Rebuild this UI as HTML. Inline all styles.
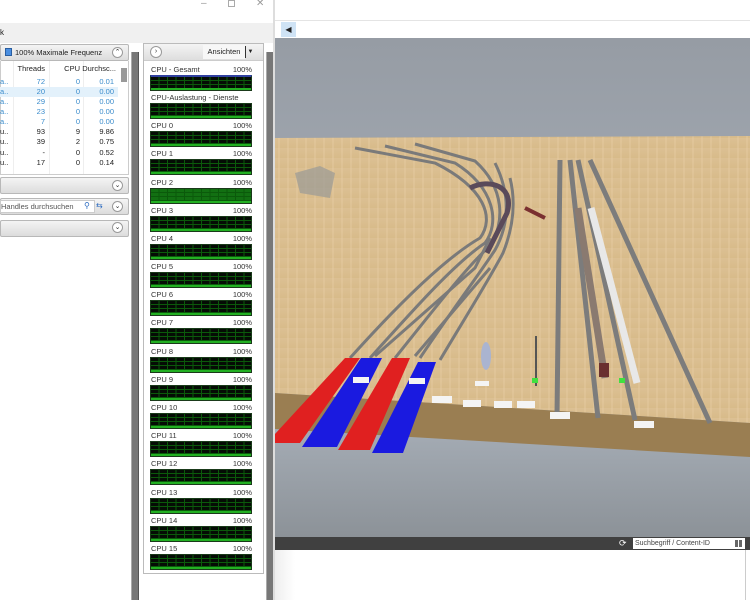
<!DOCTYPE html>
<html><head><meta charset="utf-8"><style>
*{margin:0;padding:0;box-sizing:border-box}
body{width:750px;height:600px;overflow:hidden;background:#fff;font-family:"Liberation Sans",sans-serif;font-size:7.5px;color:#222;position:relative}
.a{position:absolute}
.bar{position:absolute;left:0;width:129px;height:17px;border:1px solid #b8b8b8;border-radius:2px;background:linear-gradient(#f4f4f4,#dcdcdc)}
.cb{position:absolute;width:11px;height:11px;border-radius:50%;border:1px solid #999;background:#fff;font-size:7px;text-align:center;line-height:9px;color:#333}
.row{position:absolute;left:0;width:118px;height:10px;line-height:10px}
.row span{position:absolute;text-align:right}
.g{position:absolute;left:150px;width:102px;height:16px;background-color:#050c05;
background-image:repeating-linear-gradient(90deg,transparent 0 7.5px,#0b5a0b 7.5px 8.5px),repeating-linear-gradient(180deg,transparent 0 3px,#0b5a0b 3px 4px);border:1px solid #1a3a1a}
.g:after{content:"";position:absolute;left:0;right:0;bottom:0;height:2px;background:#22b022}
.lb{position:absolute;left:151px;width:101px;font-size:7.5px;color:#333}
.lb b{float:right;font-weight:normal}
</style></head><body>
<div class="a" style="left:0;top:0;width:275px;height:23px;background:#fff"></div>
<div class="a" style="left:201px;top:-2px;font-size:10px;color:#999">–</div>
<div class="a" style="left:228px;top:0px;width:7px;height:7px;border:1px solid #aaa"></div>
<div class="a" style="left:256px;top:-2px;font-size:10px;color:#999">✕</div>
<div class="a" style="left:0;top:23px;width:275px;height:20px;background:#f0f0f0"></div>
<div class="a" style="left:0;top:28px;font-size:8px">k</div>
<div class="a" style="left:273px;top:0;width:2px;height:600px;background:#ddd"></div>

<div class="bar" style="top:44px;height:17px"></div>
<div class="a" style="left:5px;top:48px;width:7px;height:8px;background:#4a8ee0;border:1px solid #2a5ea0"></div>
<div class="a" style="left:15px;top:48px;font-size:7.5px">100% Maximale Frequenz</div>
<div class="cb" style="left:112px;top:47px">⌃</div>
<div class="a" style="left:0;top:61px;width:129px;height:114px;border:1px solid #ccc;border-top:none;background:#fff"></div>
<div class="a" style="left:121px;top:68px;width:6px;height:14px;background:#999"></div>
<div class="a" style="left:13px;top:61px;width:1px;height:113px;background:#eee"></div>
<div class="a" style="left:49px;top:61px;width:1px;height:113px;background:#eee"></div>
<div class="a" style="left:83px;top:61px;width:1px;height:113px;background:#eee"></div>
<div class="row" style="top:64px"><span style="right:73px">Threads</span><span style="right:38px">CPU</span><span style="right:2px">Durchsc...</span></div>
<div style="color:#3a8ccc">
<div class="row" style="top:77px"><span style="left:0">a..</span><span style="right:73px">72</span><span style="right:38px">0</span><span style="right:4px">0.01</span></div>
<div class="row" style="top:87px;background:#e3f1fb"><span style="left:0">a..</span><span style="right:73px">20</span><span style="right:38px">0</span><span style="right:4px">0.00</span></div>
<div class="row" style="top:97px"><span style="left:0">a..</span><span style="right:73px">29</span><span style="right:38px">0</span><span style="right:4px">0.00</span></div>
<div class="row" style="top:107px"><span style="left:0">a..</span><span style="right:73px">23</span><span style="right:38px">0</span><span style="right:4px">0.00</span></div>
<div class="row" style="top:117px"><span style="left:0">a..</span><span style="right:73px">7</span><span style="right:38px">0</span><span style="right:4px">0.00</span></div>
</div>
<div class="row" style="top:127px"><span style="left:0">u..</span><span style="right:73px">93</span><span style="right:38px">9</span><span style="right:4px">9.86</span></div>
<div class="row" style="top:137px"><span style="left:0">u..</span><span style="right:73px">39</span><span style="right:38px">2</span><span style="right:4px">0.75</span></div>
<div class="row" style="top:148px"><span style="left:0">u..</span><span style="right:73px">-</span><span style="right:38px">0</span><span style="right:4px">0.52</span></div>
<div class="row" style="top:158px"><span style="left:0">u..</span><span style="right:73px">17</span><span style="right:38px">0</span><span style="right:4px">0.14</span></div>

<div class="bar" style="top:177px"></div><div class="cb" style="left:112px;top:180px">⌄</div>
<div class="bar" style="top:198px"></div>
<div class="a" style="left:0;top:200px;width:95px;height:13px;background:#fff;border:1px solid #ccc;font-size:7.5px;line-height:11px;color:#555">Handles durchsuchen</div>
<div class="a" style="left:84px;top:201px;font-size:8px;color:#2a6ac0">⚲</div>
<div class="a" style="left:96px;top:201px;font-size:8px;color:#2a6ac0">⇆</div>
<div class="cb" style="left:112px;top:201px">⌄</div>
<div class="bar" style="top:220px"></div><div class="cb" style="left:112px;top:222px">⌄</div>

<div class="a" style="left:131px;top:52px;width:8px;height:548px;background:#777;border-left:1px solid #aaa;border-right:1px solid #555"></div>

<div class="a" style="left:143px;top:43px;width:121px;height:531px;border:1px solid #bbb;background:#fff"></div>
<div class="a" style="left:144px;top:44px;width:119px;height:17px;background:linear-gradient(#f4f4f4,#dedede);border-bottom:1px solid #ccc"></div>
<div class="cb" style="left:150px;top:46px;width:12px;height:12px;line-height:10px">›</div>
<div class="a" style="left:203px;top:45px;width:42px;height:14px;background:#f7f7f7;font-size:7.5px;line-height:14px;text-align:center">Ansichten</div>
<div class="a" style="left:245px;top:46px;width:10px;height:12px;border-left:1px solid #333;font-size:6px;line-height:12px;text-align:center">▼</div>
<div class="a" style="left:266px;top:52px;width:7px;height:548px;background:#777;border-left:1px solid #aaa"></div>

<div class="lb" style="top:65px">CPU - Gesamt<b>100%</b></div><div class="g" style="top:75px;border-top:2px solid #3040a0"></div>
<div class="lb" style="top:93px">CPU-Auslastung - Dienste<b>100%</b></div><div class="g" style="top:103px"></div>
<div class="lb" style="top:121px">CPU 0<b>100%</b></div><div class="g" style="top:131px"></div>
<div class="lb" style="top:149px">CPU 1<b>100%</b></div><div class="g" style="top:159px"></div>
<div class="lb" style="top:178px">CPU 2<b>100%</b></div><div class="g" style="top:188px;background-color:#127012"></div>
<div class="lb" style="top:206px">CPU 3<b>100%</b></div><div class="g" style="top:216px"></div>
<div class="lb" style="top:234px">CPU 4<b>100%</b></div><div class="g" style="top:244px"></div>
<div class="lb" style="top:262px">CPU 5<b>100%</b></div><div class="g" style="top:272px"></div>
<div class="lb" style="top:290px">CPU 6<b>100%</b></div><div class="g" style="top:300px"></div>
<div class="lb" style="top:318px">CPU 7<b>100%</b></div><div class="g" style="top:328px"></div>
<div class="lb" style="top:347px">CPU 8<b>100%</b></div><div class="g" style="top:357px"></div>
<div class="lb" style="top:375px">CPU 9<b>100%</b></div><div class="g" style="top:385px"></div>
<div class="lb" style="top:403px">CPU 10<b>100%</b></div><div class="g" style="top:413px"></div>
<div class="lb" style="top:431px">CPU 11<b>100%</b></div><div class="g" style="top:441px"></div>
<div class="lb" style="top:459px">CPU 12<b>100%</b></div><div class="g" style="top:469px"></div>
<div class="lb" style="top:488px">CPU 13<b>100%</b></div><div class="g" style="top:498px"></div>
<div class="lb" style="top:516px">CPU 14<b>100%</b></div><div class="g" style="top:526px"></div>
<div class="lb" style="top:544px">CPU 15<b>100%</b></div><div class="g" style="top:554px"></div>

<div class="a" style="left:275px;top:20px;width:475px;height:1px;background:#e4e4e4"></div>
<div class="a" style="left:281px;top:22px;width:15px;height:15px;background:#cfe3f5;font-size:8px;line-height:15px;text-align:center;color:#222">◀</div>
<svg class="a" style="left:275px;top:38px" width="475" height="499" viewBox="0 0 475 499">
<defs>
<linearGradient id="sky" x1="0" y1="0" x2="0" y2="1"><stop offset="0" stop-color="#969ca4"/><stop offset="1" stop-color="#b4bcc8"/></linearGradient>
<linearGradient id="fl" x1="0" y1="0" x2="0" y2="1"><stop offset="0" stop-color="#b0b8c2"/><stop offset="1" stop-color="#8c9298"/></linearGradient>
<linearGradient id="wd" x1="0" y1="0" x2="0" y2="1"><stop offset="0" stop-color="#dcc094"/><stop offset="1" stop-color="#d8bb8a"/></linearGradient>
<pattern id="gr" width="9" height="10" patternUnits="userSpaceOnUse"><rect width="9" height="10" fill="url(#wd)"/><rect x="3" width="2" height="10" fill="#e6cfa6" opacity=".35"/></pattern>
</defs>
<rect width="475" height="499" fill="url(#sky)"/>
<rect y="340" width="475" height="159" fill="url(#fl)"/>
<polygon points="0,100 475,98 475,385 0,355" fill="url(#gr)"/>
<polygon points="0,355 475,385 475,419 0,391" fill="#9a7e52"/>
<path d="M20,135 L45,128 L60,135 L55,160 L25,155 Z" fill="#9a9a96" opacity=".7"/>
<g fill="none" stroke="#7a7a7a" stroke-width="3">
<path d="M75,320 C120,270 170,220 205,200 C220,180 210,150 160,125 L80,110"/>
<path d="M95,320 C140,270 180,225 210,205 C225,185 220,150 180,125 L110,108"/>
<path d="M120,320 C160,270 195,225 215,208 C230,185 230,150 200,123 L140,106"/>
<path d="M145,320 C175,275 205,235 220,212 C235,185 235,155 220,125"/>
<path d="M165,322 C190,280 215,240 228,215 C240,185 240,160 235,140"/>
<path d="M100,318 L200,230 L215,200"/>
<path d="M140,318 L215,230"/>
</g>
<path d="M195,150 C215,140 240,148 232,175 L212,215" stroke="#5a4a5a" stroke-width="5" fill="none"/>
<path d="M250,170 L270,180" stroke="#7a3030" stroke-width="4"/>
<g stroke="#7c7c7c" stroke-width="5">
<line x1="285" y1="122" x2="282" y2="378"/>
<line x1="295" y1="122" x2="323" y2="380"/>
<line x1="303" y1="122" x2="360" y2="382"/>
<line x1="315" y1="122" x2="435" y2="385"/>
</g>
<line x1="303" y1="170" x2="330" y2="340" stroke="#8a7a70" stroke-width="7"/>
<line x1="316" y1="170" x2="362" y2="345" stroke="#e8e8e8" stroke-width="7"/>
<rect x="324" y="325" width="10" height="14" fill="#6a3030"/>
<polygon points="70,320 85,320 25,405 0,405 0,396" fill="#e02020"/>
<polygon points="86,320 107,320 62,409 27,409" fill="#1a1ae0"/>
<polygon points="117,320 135,320 95,412 63,412" fill="#e02020"/>
<polygon points="143,324 161,324 128,415 97,415" fill="#1a1ae0"/>
<g fill="#f4f4f4"><rect x="78" y="339" width="16" height="6"/><rect x="134" y="340" width="16" height="6"/><rect x="157" y="358" width="20" height="7"/><rect x="188" y="362" width="18" height="7"/><rect x="219" y="363" width="18" height="7"/><rect x="242" y="363" width="18" height="7"/><rect x="275" y="374" width="20" height="7"/><rect x="359" y="383" width="20" height="7"/><rect x="200" y="343" width="14" height="5"/></g>
<ellipse cx="211" cy="318" rx="5" ry="14" fill="#aab4d0"/>
<rect x="260" y="298" width="2" height="50" fill="#555"/>
<rect x="257" y="340" width="6" height="5" fill="#40e040"/>
<rect x="344" y="340" width="6" height="5" fill="#40e040"/>
</svg>
<div class="a" style="left:275px;top:537px;width:475px;height:13px;background:#404040"></div>
<div class="a" style="left:619px;top:538px;font-size:9px;color:#fff;line-height:11px">⟳</div>
<div class="a" style="left:633px;top:538px;width:112px;height:11px;background:#fff;font-size:7px;line-height:11px;color:#444;padding-left:2px">Suchbegriff / Content-ID</div>
<div class="a" style="left:735px;top:540px;width:7px;height:7px;background:repeating-linear-gradient(90deg,#666 0 3px,transparent 3px 4px)"></div>
<div class="a" style="left:275px;top:550px;width:20px;height:50px;background:linear-gradient(90deg,#eee,#fff)"></div>
<div class="a" style="left:745px;top:550px;width:1px;height:50px;background:#ccc"></div>
</body></html>
